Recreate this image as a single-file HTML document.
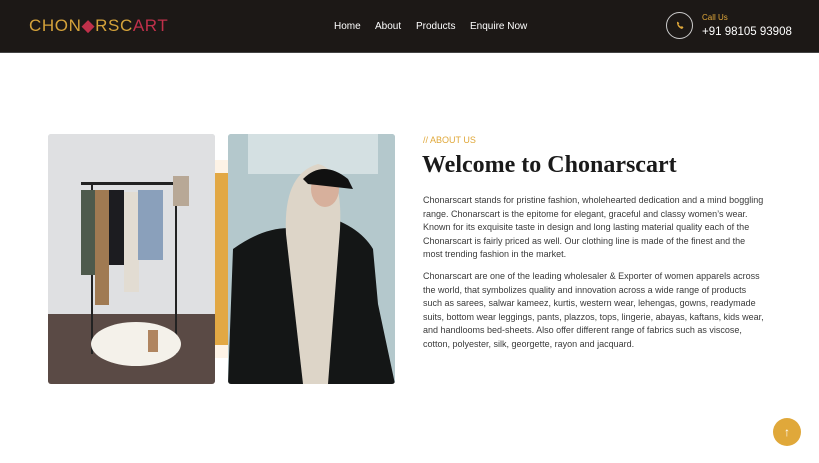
<!DOCTYPE html>
<html><head><meta charset="utf-8">
<style>
*{margin:0;padding:0;box-sizing:border-box}
body{width:819px;height:463px;background:#fff;font-family:"Liberation Sans",sans-serif;position:relative;overflow:hidden}
.hdr{position:absolute;left:0;top:0;width:819px;height:53px;background:#1c1816;border-bottom:1px solid #444}
.logo{position:absolute;left:29px;top:16px;font-size:17px;letter-spacing:0.6px;color:#d4a23a;font-weight:300}
.logo span{color:#c0304a}
.nav{position:absolute;top:21px;font-size:10px;color:#fff}
.call{position:absolute;left:666px;top:12px;width:27px;height:27px;border:1px solid #ccc;border-radius:50%}
.t{position:absolute;font-size:9px;line-height:13.6px;color:#3a3a3a;left:423px;width:360px}
</style></head><body>
<div class="hdr">
<div class="logo">CHON<span>&#9670;</span>RSC<span>ART</span></div>
<div class="nav" style="left:334px">Home</div>
<div class="nav" style="left:375px">About</div>
<div class="nav" style="left:416px">Products</div>
<div class="nav" style="left:470px">Enquire Now</div>
<div class="call"><svg width="27" height="27" viewBox="0 0 27 27" style="position:absolute;left:-1px;top:-1px"><path d="M11 10c0 4 2 6 5 7l1.5-1.5-1.5-1.5-1 .8c-1-.5-2-1.5-2.5-2.5l.8-1-1.5-1.5z" fill="#e0a83a"/></svg></div>
<div style="position:absolute;left:702px;top:13px;font-size:8px;color:#e0a83a">Call Us</div>
<div style="position:absolute;left:702px;top:26px;font-size:11.5px;color:#fff">+91 98105 93908</div>
</div>

<div style="position:absolute;left:215px;top:160px;width:13px;height:198px;background:#fdf3e6"></div>
<div style="position:absolute;left:215px;top:173px;width:13px;height:172px;background:#e2a844"></div>

<div style="position:absolute;left:48px;top:134px;width:167px;height:250px;border-radius:3px;overflow:hidden;background:#dcdee0">
<svg width="167" height="250">
<rect x="0" y="0" width="167" height="180" fill="#dfe0e2"/>
<rect x="0" y="180" width="167" height="70" fill="#5a4a45"/>
<rect x="33" y="48" width="100" height="3" fill="#222"/>
<rect x="43" y="50" width="2" height="170" fill="#222"/><rect x="127" y="50" width="2" height="170" fill="#222"/>
<rect x="33" y="56" width="14" height="85" fill="#4e5a4c"/>
<rect x="47" y="56" width="14" height="115" fill="#a07a52"/>
<rect x="61" y="56" width="15" height="75" fill="#1c1c20"/>
<rect x="76" y="58" width="15" height="100" fill="#e2dcd2"/>
<rect x="90" y="56" width="25" height="70" fill="#8aa0bb"/>
<rect x="125" y="42" width="16" height="30" fill="#b8a896"/>
<ellipse cx="88" cy="210" rx="45" ry="22" fill="#f4f1ea"/>
<rect x="100" y="196" width="10" height="22" fill="#b08560"/>
</svg></div>

<div style="position:absolute;left:228px;top:134px;width:167px;height:250px;border-radius:3px;overflow:hidden;background:#b8ccd0">
<svg width="167" height="250">
<rect width="167" height="250" fill="#b4c8cc"/>
<rect x="20" y="0" width="130" height="40" fill="#d4e0e2"/>
<path d="M0 250 L5 115 Q40 90 70 95 L90 80 Q130 90 145 115 L150 170 L167 250Z" fill="#141616"/>
<path d="M58 100 Q55 40 90 30 Q115 35 112 95 L100 250 L75 250Z" fill="#ddd5c8"/>
<ellipse cx="97" cy="55" rx="14" ry="18" fill="#d7b09c"/>
<path d="M75 45 Q95 25 120 45 L125 55 L80 50Z" fill="#111"/>
</svg></div>

<div style="position:absolute;left:423px;top:135px;font-size:9px;color:#e0a83a">// ABOUT US</div>
<div style="position:absolute;left:422px;top:152px;font-family:'Liberation Serif',serif;font-weight:bold;font-size:24px;color:#1a1a1a">Welcome to Chonarscart</div>
<div class="t" style="top:194px">Chonarscart stands for pristine fashion, wholehearted dedication and a mind boggling<br>range. Chonarscart is the epitome for elegant, graceful and classy women’s wear.<br>Known for its exquisite taste in design and long lasting material quality each of the<br>Chonarscart is fairly priced as well. Our clothing line is made of the finest and the<br>most trending fashion in the market.</div>
<div class="t" style="top:270px">Chonarscart are one of the leading wholesaler &amp; Exporter of women apparels across<br>the world, that symbolizes quality and innovation across a wide range of products<br>such as sarees, salwar kameez, kurtis, western wear, lehengas, gowns, readymade<br>suits, bottom wear leggings, pants, plazzos, tops, lingerie, abayas, kaftans, kids wear,<br>and handlooms bed-sheets. Also offer different range of fabrics such as viscose,<br>cotton, polyester, silk, georgette, rayon and jacquard.</div>

<div style="position:absolute;left:773px;top:418px;width:28px;height:28px;border-radius:50%;background:#e0a83a;color:#fff;font-size:12px;text-align:center;line-height:28px">&#8593;</div>
</body></html>
